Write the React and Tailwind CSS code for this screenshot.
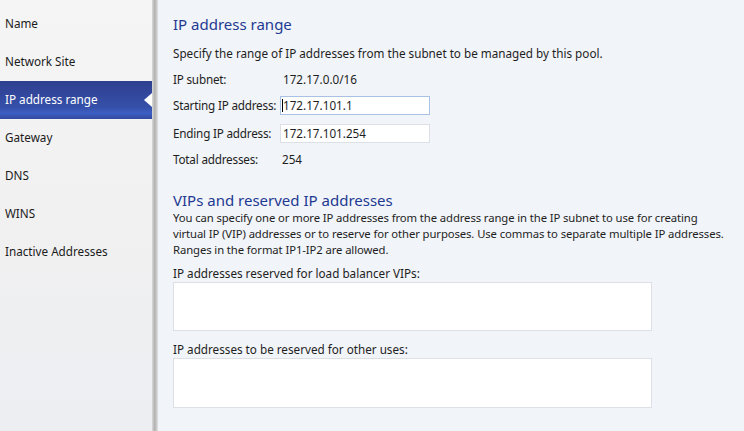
const NAV = [
  'Name',
  'Network Site',
  'IP address range',
  'Gateway',
  'DNS',
  'WINS',
  'Inactive Addresses',
];

function NavItem({ label, active }) {
  if (active) {
    return (
      <div className="relative h-[38px] flex items-center pl-[5px] text-white bg-[linear-gradient(180deg,#2f3f8f_0%,#3550aa_70%,#3d5fc4_85%,#33489e_100%)]">
        {label}
        <svg className="absolute right-0 top-[12px]" width="8" height="14" viewBox="0 0 8 14">
          <polygon points="8,0 0,7 8,14" fill="#ffffff" />
        </svg>
      </div>
    );
  }
  return <div className="h-[38px] flex items-center pl-[5px] text-[#1b1b1b]">{label}</div>;
}

function Row({ label, className, children }) {
  return (
    <div className={'flex items-center whitespace-nowrap ' + className}>
      <div className="w-[107px] shrink-0 tracking-[-0.2px]">{label}</div>
      {children}
    </div>
  );
}

export default function App() {
  return (
    <div
      className="flex w-[744px] h-[431px] overflow-hidden text-[11.7px] text-[#1e1e1e]"
      style={{ fontFamily: '"Segoe UI", "Noto Sans", sans-serif' }}
    >
      <div className="w-[152px] shrink-0 pt-[5px] bg-[linear-gradient(180deg,#f5f5f5_0%,#f0f0f1_60%,#eceef2_100%)]">
        {NAV.map((n) => (
          <NavItem key={n} label={n} active={n === 'IP address range'} />
        ))}
      </div>
      <div className="w-[6px] shrink-0 bg-[linear-gradient(90deg,#dadada_0%,#b4b4b4_40%,#bcbcbc_60%,#e2e2e2_100%)]" />
      <div className="flex-1 bg-[#f1f4f8] pl-[15px] pt-[12px] whitespace-nowrap">
        <h1 className="text-[15px] leading-[24px] text-[#1f3a92]">IP address range</h1>
        <p className="mt-[9px] leading-[16px]">
          Specify the range of IP addresses from the subnet to be managed by this pool.
        </p>
        <div className="mt-[11px] flex flex-col">
          <Row label="IP subnet:" className="h-[16px]">
            <span className="pl-[3px]">172.17.0.0/16</span>
          </Row>
          <Row label="Starting IP address:" className="mt-[8px] h-[19px]">
            <div className="w-[150px] h-[19px] bg-white border border-[#a9c1e2] flex items-center pl-[1px]">
              <span className="w-px h-[13px] bg-black" />
              <span>172.17.101.1</span>
            </div>
          </Row>
          <Row label="Ending IP address:" className="mt-[9px] h-[19px]">
            <div className="w-[150px] h-[19px] bg-white border border-[#dcdfe5] flex items-center pl-[2px]">
              172.17.101.254
            </div>
          </Row>
          <Row label="Total addresses:" className="mt-[9px] h-[16px]">
            <span className="pl-[2px]">254</span>
          </Row>
        </div>
        <h2 className="mt-[22px] text-[15px] leading-[20px] text-[#1f3a92]">
          VIPs and reserved IP addresses
        </h2>
        <p className="leading-[16px] text-[11.3px] tracking-[-0.1px]">
          You can specify one or more IP addresses from the address range in the IP subnet to use for creating
          <br />
          virtual IP (VIP) addresses or to reserve for other purposes. Use commas to separate multiple IP addresses.
          <br />
          Ranges in the format IP1-IP2 are allowed.
        </p>
        <div className="mt-[7px] leading-[16px]">IP addresses reserved for load balancer VIPs:</div>
        <div className="mt-[1px] w-[479px] h-[49px] bg-white border border-[#dcdfe5]" />
        <div className="mt-[10px] leading-[16px]">IP addresses to be reserved for other uses:</div>
        <div className="mt-[1px] w-[479px] h-[50px] bg-white border border-[#dcdfe5]" />
      </div>
    </div>
  );
}
